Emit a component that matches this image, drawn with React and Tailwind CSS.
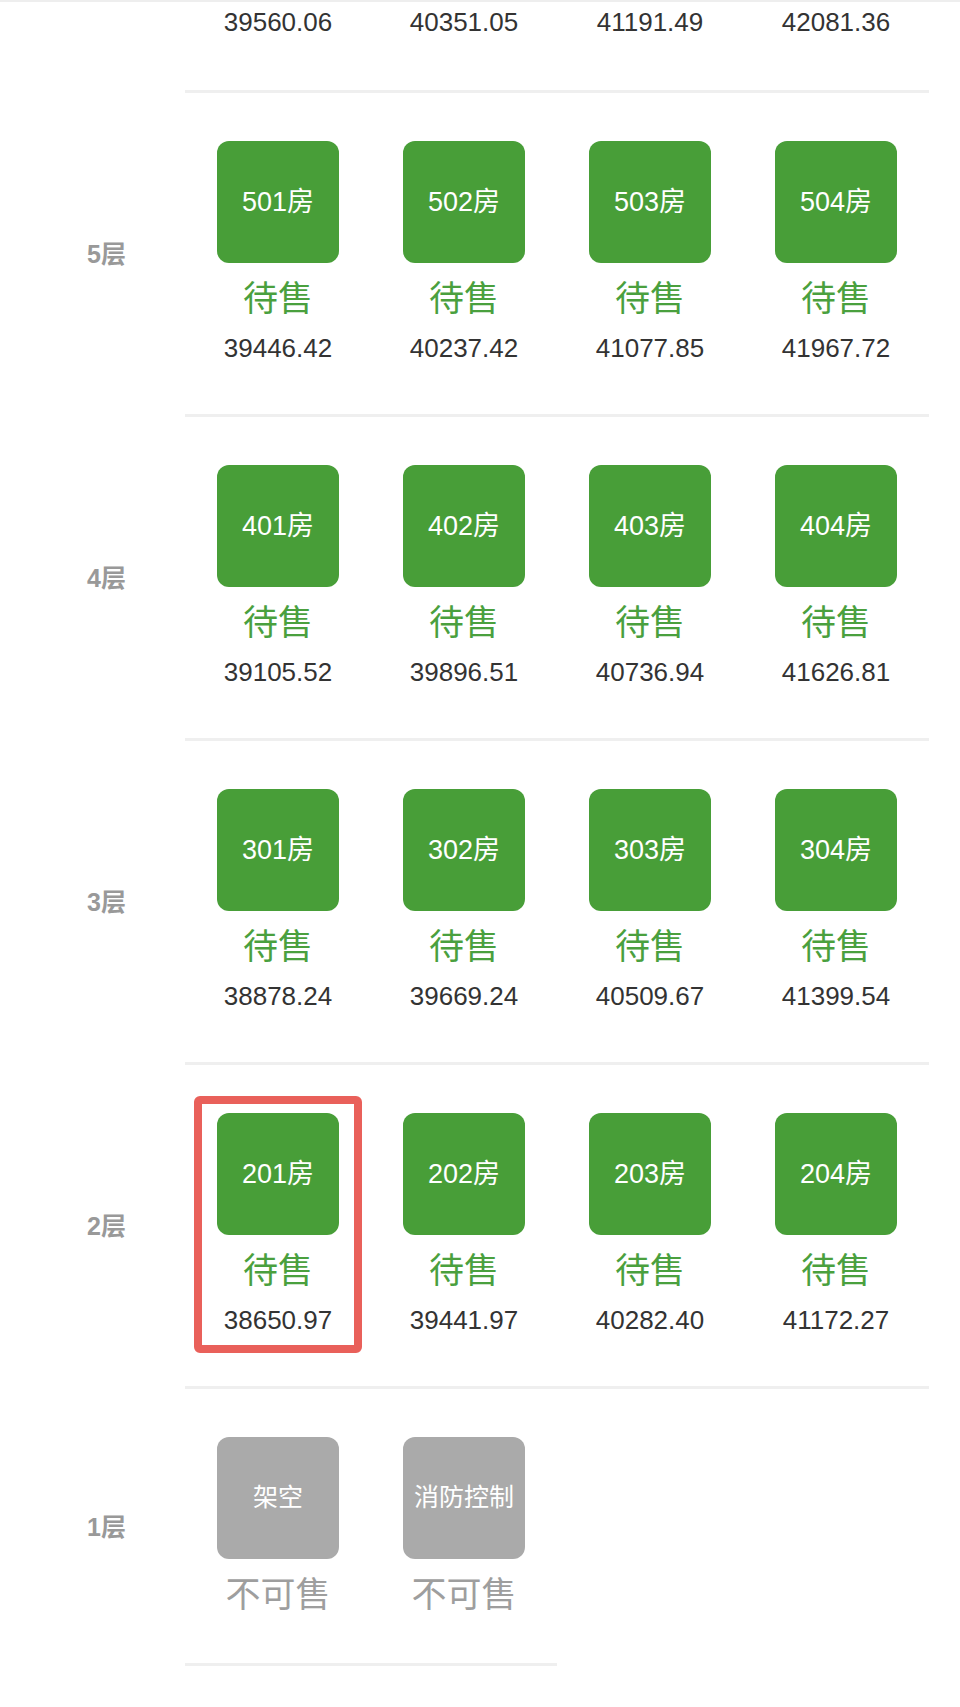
import React from 'react';

const FONT = { fontFamily: '"Liberation Sans", "Noto Sans CJK SC", sans-serif' };

// 6层只露出了价格那一行
const topPrices = ['39560.06', '40351.05', '41191.49', '42081.36'];

const floors = [
  { floor: 5, rooms: [
    { name: '501房', status: 'sale', price: '39446.42' },
    { name: '502房', status: 'sale', price: '40237.42' },
    { name: '503房', status: 'sale', price: '41077.85' },
    { name: '504房', status: 'sale', price: '41967.72' },
  ] },
  { floor: 4, rooms: [
    { name: '401房', status: 'sale', price: '39105.52' },
    { name: '402房', status: 'sale', price: '39896.51' },
    { name: '403房', status: 'sale', price: '40736.94' },
    { name: '404房', status: 'sale', price: '41626.81' },
  ] },
  { floor: 3, rooms: [
    { name: '301房', status: 'sale', price: '38878.24' },
    { name: '302房', status: 'sale', price: '39669.24' },
    { name: '303房', status: 'sale', price: '40509.67' },
    { name: '304房', status: 'sale', price: '41399.54' },
  ] },
  { floor: 2, rooms: [
    { name: '201房', status: 'sale', price: '38650.97', selected: true },
    { name: '202房', status: 'sale', price: '39441.97' },
    { name: '203房', status: 'sale', price: '40282.40' },
    { name: '204房', status: 'sale', price: '41172.27' },
  ] },
  { floor: 1, rooms: [
    { name: '架空', status: 'none' },
    { name: '消防控制', status: 'none' },
  ] },
];

const RoomCell = ({ room }) => {
  const forSale = room.status === 'sale';
  return (
    <div className="relative w-[186px] flex flex-col items-center pt-[48px] pb-[46px]">
      {room.selected && (
        <div className="absolute left-[9px] right-[9px] top-[31px] bottom-[33px] border-[8px] border-[#e9605a] rounded-[6px]" />
      )}
      <div
        className={
          'w-[122px] h-[122px] rounded-[12px] flex items-center justify-center text-white ' +
          (forSale ? 'bg-[#489e38] text-[27px]' : 'bg-[#aaaaaa] text-[25px]')
        }
      >
        {room.name}
      </div>
      {forSale ? (
        <>
          <div className="mt-[14px] text-[35px] leading-[44px] text-[#4aa03e]">待售</div>
          <div className="mt-[10px] mb-[3px] text-[26px] leading-[34px] text-[#333333]">{room.price}</div>
        </>
      ) : (
        <div className="mt-[14px] text-[35px] leading-[44px] text-[#9e9e9e]">不可售</div>
      )}
    </div>
  );
};

export default function App() {
  return (
    <div className="w-[960px] min-h-[1707px] bg-white" style={FONT}>
      <div className="h-[2px] bg-[#eeeeee]" />

      <div className="flex">
        <div className="w-[185px]" />
        <div className="flex border-b-[3px] border-[#efefef]">
          {topPrices.map((p) => (
            <div key={p} className="w-[186px] flex justify-center pt-[3px] pb-[51px] text-[26px] leading-[34px] text-[#333333]">
              {p}
            </div>
          ))}
        </div>
      </div>

      {floors.map((f) => (
        <div key={f.floor} className="flex">
          <div className="w-[185px] flex items-center pl-[87px] text-[25px] font-bold text-[#999999]">
            {f.floor}层
          </div>
          <div className="flex border-b-[3px] border-[#efefef]">
            {f.rooms.map((r) => (
              <RoomCell key={r.name} room={r} />
            ))}
          </div>
        </div>
      ))}
    </div>
  );
}
